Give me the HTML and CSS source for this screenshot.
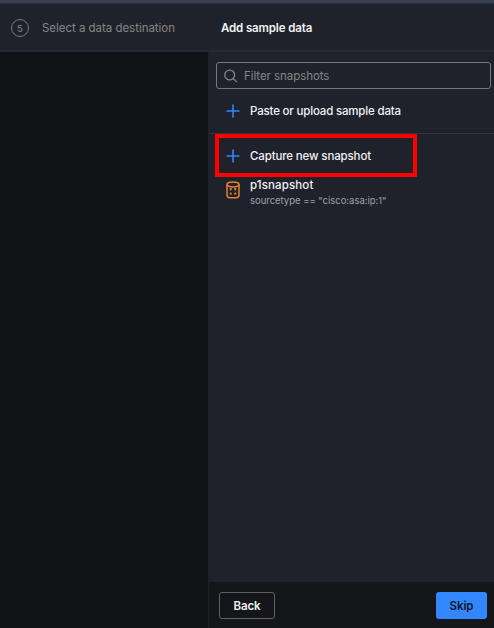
FILE: index.html
```html
<!DOCTYPE html>
<html lang="en">
<head>
<meta charset="utf-8">
<title>Add sample data</title>
<link rel="stylesheet" href="styles.css">
</head>
<body>
<div class="app">
  <div class="topbar"></div>
  <div class="columns">
    <section class="steps">
      <header class="head step-head"><span class="step-number">5</span><span class="step-title">Select a data destination</span></header>
    </section>
    <section class="panel">
      <header class="head panel-head"><h1 class="title">Add sample data</h1></header>
      <div class="body">
        <div class="search">
          <svg class="search-icon" width="14" height="14" viewBox="0 0 14 14"><circle cx="5.7" cy="6" r="4.9"/><path d="M9.3 9.6 12.8 13.1"/></svg>
          <span class="placeholder">Filter snapshots</span>
        </div>
        <div class="row upload">
          <svg class="plus" width="14" height="14" viewBox="0 0 14 14"><path d="M7 .5v13M.5 7h13"/></svg>
          <span class="label paste-label">Paste or upload sample data</span>
        </div>
        <div class="row capture">
          <svg class="plus" width="14" height="14" viewBox="0 0 14 14"><path d="M7 .5v13M.5 7h13"/></svg>
          <span class="label capture-label">Capture new snapshot</span>
          <div class="highlight"></div>
        </div>
        <div class="snapshot">
          <svg class="db" width="14" height="18" viewBox="0 0 14 18"><ellipse cx="7" cy="3.5" rx="6" ry="2.4"/><path d="M1 3.5v10.2c0 2 1.4 3 3 3h6c1.6 0 3-1 3-3V3.5"/><path class="frame" d="M4.4 9.4V8H6M8 8h1.6v1.4M9.6 11.4v1.4H8M6 12.8H4.4v-1.4"/></svg>
          <div class="info"><span class="label name">p1snapshot</span><span class="query">sourcetype == "cisco:asa:ip:1"</span></div>
        </div>
      </div>
      <footer class="footer"><button class="btn back">Back</button><button class="btn skip">Skip</button></footer>
    </section>
  </div>
</div>
</body>
</html>
```

FILE: styles.css
```css
* { box-sizing: border-box; }
body { margin: 0; background: #111215; font-family: Inter, "Liberation Sans", sans-serif; color: #f0f1f3; }
.app { width: 494px; height: 628px; display: flex; flex-direction: column; overflow: hidden; }
.topbar { height: 4px; background: linear-gradient(#373e4f 75%, #292e3a 75%); }
.columns { flex: 1; display: grid; grid-template-columns: 208px 1fr; }
.steps { background: #111215; }
.panel { display: flex; flex-direction: column; background: #20222b; border-left: 1px solid #1d212b; }
.head { height: 48px; padding-top: 2px; display: flex; align-items: center; background: #20222b; border-bottom: 2px solid #2a2b31; white-space: nowrap; }
.step-head { padding-left: 11px; gap: 13px; color: #858585; }
.step-number { width: 18px; height: 18px; border: 1px solid #777; border-radius: 50%; display: flex; align-items: center; justify-content: center; font-size: 9.5px; }
.step-title { font-size: 11.5px; letter-spacing: -0.03px; }
.panel-head { padding-left: 12px; }
.title { margin: 0; font-size: 11.5px; font-weight: 600; letter-spacing: -0.13px; }
.body { flex: 1; padding-top: 10px; }
.search { height: 27px; margin: 0 3px 0 7px; padding-left: 7px; display: flex; align-items: center; gap: 6px; border: 1px solid #747780; border-radius: 3px; }
.search-icon { fill: none; stroke: #858585; stroke-width: 1.3; }
.placeholder { font-size: 11.5px; letter-spacing: -0.06px; color: #858585; }
.row { height: 45px; padding-left: 17px; display: flex; align-items: center; gap: 10px; white-space: nowrap; }
.upload { border-bottom: 1px solid #32353e; }
.capture { position: relative; height: 44px; }
.highlight { position: absolute; left: 6px; top: 0; width: 202px; height: 43px; border: 4px solid #fe0000; }
.plus { fill: none; stroke: #3284fb; stroke-width: 1.6; }
.label { font-size: 11.5px; font-weight: 500; }
.paste-label { letter-spacing: -0.18px; }
.capture-label { letter-spacing: -0.14px; }
.snapshot { display: flex; gap: 10px; padding: 3px 0 0 17px; }
.db { fill: none; stroke: #e78132; stroke-width: 1.5; }
.frame { stroke-width: 1.3; }
.info { display: flex; flex-direction: column; margin-top: -4px; white-space: nowrap; }
.name { line-height: 16px; letter-spacing: 0.12px; }
.query { font-size: 9.5px; line-height: 15px; letter-spacing: -0.02px; color: #a0a1a5; }
.footer { height: 46px; padding: 10px 7px 0 10px; display: flex; justify-content: space-between; align-items: flex-start; background: #15161a; }
.btn { height: 27px; padding: 0; border-radius: 3px; font: 600 11.5px Inter, "Liberation Sans", sans-serif; letter-spacing: -0.1px; }
.back { width: 56px; background: #15161a; color: #f0f1f3; border: 1px solid #606060; }
.skip { width: 51px; background: #3287ff; color: #10151f; border: 0; }
```
